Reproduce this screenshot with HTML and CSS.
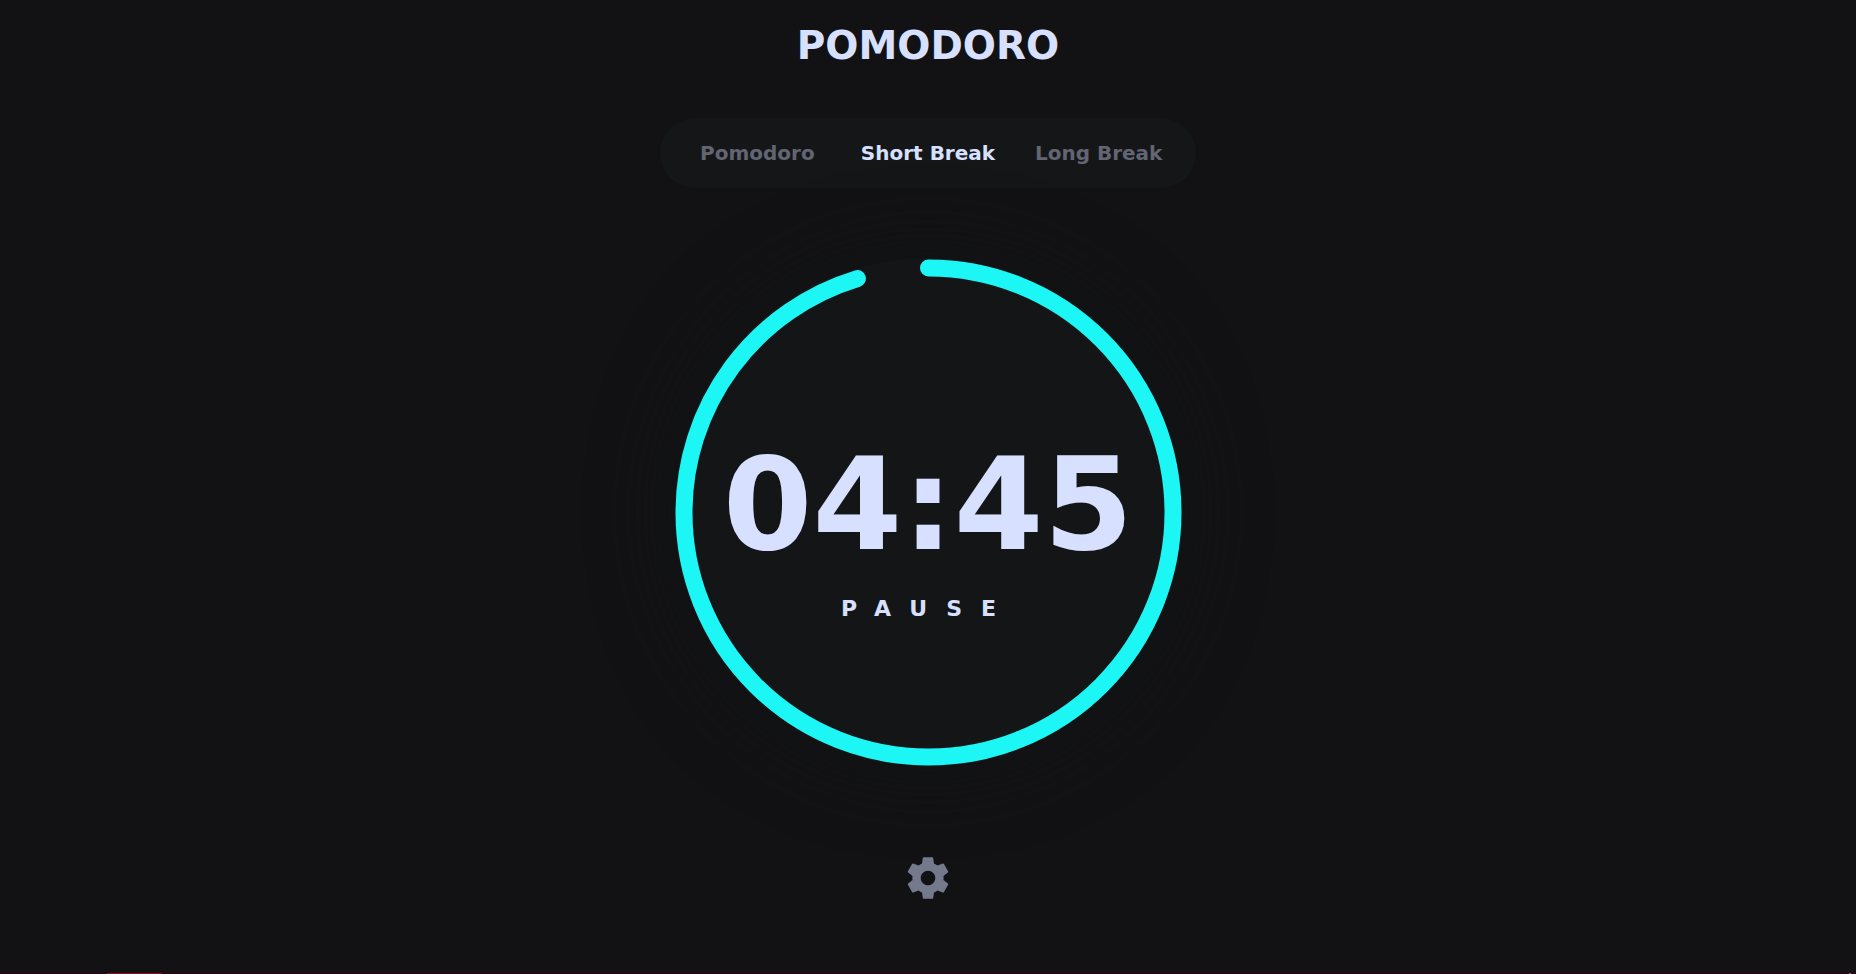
FILE: index.html
```html
<!DOCTYPE html>
<html lang="en">
<head>
<meta charset="utf-8">
<title>Pomodoro</title>
<link rel="stylesheet" href="styles.css">
</head>
<body>
<main class="app">
  <h1 class="title">POMODORO</h1>
  <nav class="tabs" aria-label="Timer mode">
    <button class="tab" type="button">Pomodoro</button>
    <button class="tab tab-active" type="button" aria-current="true">Short Break</button>
    <button class="tab" type="button">Long Break</button>
  </nav>
  <section class="dial">
    <svg class="ring" viewBox="0 0 508 508" aria-hidden="true">
      <circle class="progress" cx="254.5" cy="254.5" r="244.5" pathLength="1000" transform="rotate(-90 254.5 254.5)"/>
    </svg>
    <div class="readout">
      <div class="time" role="timer">04:45</div>
      <button class="pause" type="button">PAUSE</button>
    </div>
  </section>
  <button class="settings" type="button" aria-label="Settings">
    <svg class="gear" viewBox="0 0 24 24" aria-hidden="true"><path d="M19.43 12.98c.04-.32.07-.64.07-.98s-.03-.66-.07-.98l2.11-1.65c.19-.15.24-.42.12-.64l-2-3.46c-.12-.22-.39-.3-.61-.22l-2.49 1c-.52-.4-1.08-.73-1.69-.98l-.38-2.65C14.46 2.18 14.25 2 14 2h-4c-.25 0-.46.18-.49.42l-.38 2.65c-.61.25-1.17.59-1.69.98l-2.49-1c-.23-.09-.49 0-.61.22l-2 3.46c-.13.22-.07.49.12.64l2.11 1.65c-.04.32-.07.65-.07.98s.03.66.07.98l-2.11 1.65c-.19.15-.24.42-.12.64l2 3.46c.12.22.39.3.61.22l2.49-1c.52.4 1.08.73 1.69.98l.38 2.65c.03.24.24.42.49.42h4c.25 0 .46-.18.49-.42l.38-2.65c.61-.25 1.17-.59 1.69-.98l2.49 1c.23.09.49 0 .61-.22l2-3.46c.12-.22.07-.49-.12-.64l-2.11-1.65zM12 15.5c-1.93 0-3.5-1.57-3.5-3.5s1.57-3.5 3.5-3.5 3.5 1.57 3.5 3.5-1.57 3.5-3.5 3.5z"/></svg>
  </button>
</main>
<footer class="strip"><span class="strip-mark"></span><span class="strip-dot"></span></footer>
</body>
</html>
```
FILE: styles.css
```css
* { box-sizing: border-box; }
body {
  margin: 0;
  min-height: 100vh;
  display: flex;
  flex-direction: column;
  background: #121214;
  color: #d7e0ff;
  font-family: "DejaVu Sans", Verdana, sans-serif;
  font-weight: 700;
}
button {
  border: 0;
  padding: 0;
  background: none;
  color: inherit;
  font: inherit;
  cursor: pointer;
}
.app {
  flex: 1;
  display: flex;
  flex-direction: column;
  align-items: center;
}
.title {
  margin: 21px 0 47px;
  font-size: 39px;
  line-height: 50px;
}
.tabs {
  display: grid;
  grid-template-columns: repeat(3, 1fr);
  width: 536px;
  max-width: 100%;
  padding: 12px;
  border-radius: 36px;
  background: #141618;
}
.tab {
  height: 46px;
  font-size: 20px;
  white-space: nowrap;
  color: #626572;
}
.tab-active { color: #d7e0ff; }
.dial {
  display: grid;
  place-items: center;
  margin-top: 70px;
  border-radius: 50%;
  background: #131517;
  box-shadow: 0 0 80px #131416;
}
.ring, .readout { grid-area: 1 / 1; }
.ring {
  width: 508px;
  max-width: 100%;
}
.progress {
  fill: none;
  stroke: #1cf6f4;
  stroke-width: 17;
  stroke-linecap: round;
  stroke-dasharray: 953 1000;
}
.readout {
  display: flex;
  flex-direction: column;
  align-items: center;
  padding-top: 32px;
}
.time {
  font-size: 129px;
  line-height: 146px;
}
.pause {
  margin-top: 16px;
  font-size: 22px;
  line-height: 32px;
  letter-spacing: 19px;
}
.settings {
  display: flex;
  margin-top: 87px;
}
.gear {
  width: 50px;
  height: 50px;
  fill: #747a8b;
}
.strip {
  display: flex;
  justify-content: space-between;
  height: 1px;
  padding: 0 5px 0 107px;
  background: #32000e;
}
.strip-mark { width: 55px; background: #8b1126; }
.strip-dot { width: 2px; background: #8d6b76; }
```
